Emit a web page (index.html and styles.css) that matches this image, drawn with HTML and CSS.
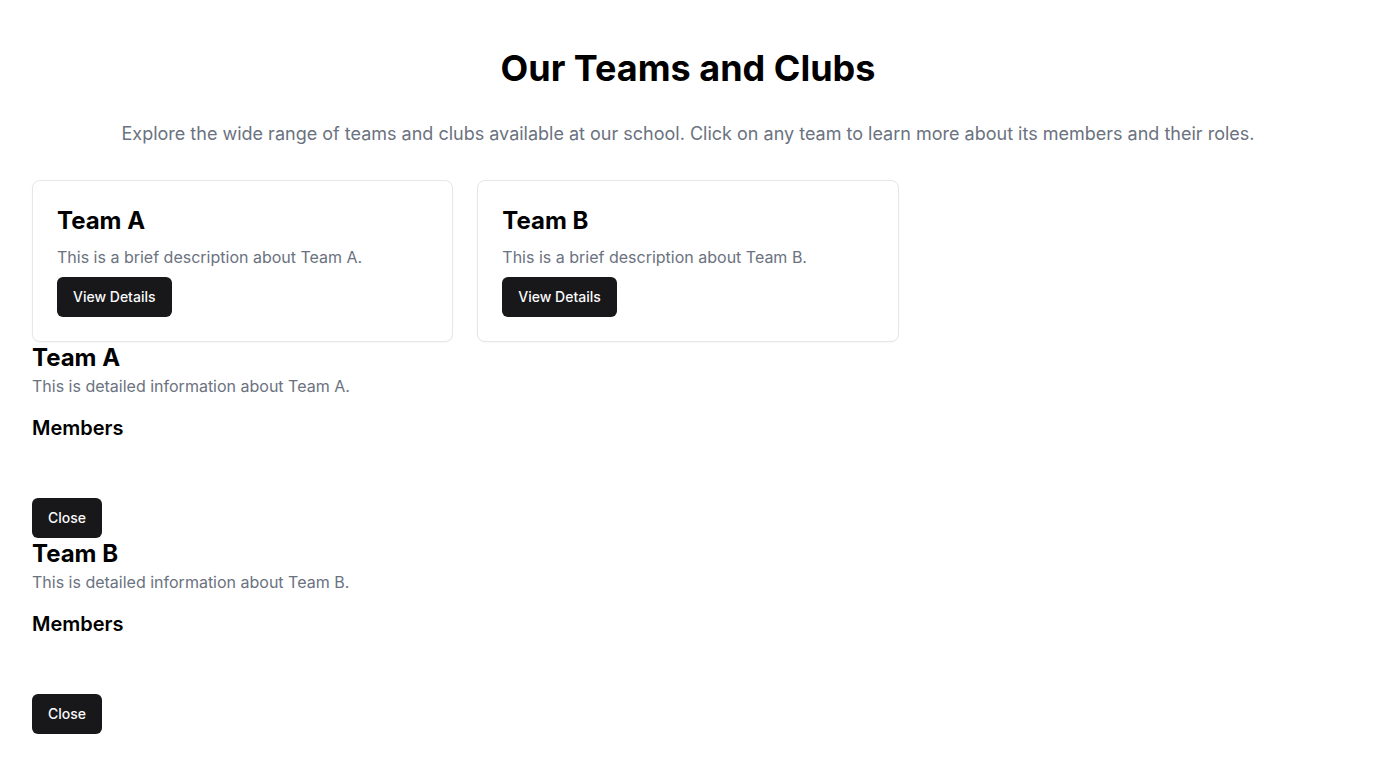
FILE: index.html
```html
<!DOCTYPE html>
<html lang="en">
<head>
<meta charset="utf-8">
<title>Our Teams and Clubs</title>
<link rel="stylesheet" href="styles.css">
</head>
<body>
<main class="page">
  <h1 class="title">Our Teams and Clubs</h1>
  <p class="subtitle">Explore the wide range of teams and clubs available at our school. Click on any team to learn more about its members and their roles.</p>
  <div class="grid">
    <div class="card">
      <h2 class="card-title">Team A</h2>
      <p class="card-desc">This is a brief description about Team A.</p>
      <button class="btn btn-view">View Details</button>
    </div>
    <div class="card">
      <h2 class="card-title">Team B</h2>
      <p class="card-desc">This is a brief description about Team B.</p>
      <button class="btn btn-view">View Details</button>
    </div>
  </div>
  <section class="detail">
    <h2 class="detail-title">Team A</h2>
    <p class="detail-desc">This is detailed information about Team A.</p>
    <h3 class="members">Members</h3>
    <ul class="member-list"></ul>
    <button class="btn btn-close">Close</button>
  </section>
  <section class="detail">
    <h2 class="detail-title">Team B</h2>
    <p class="detail-desc">This is detailed information about Team B.</p>
    <h3 class="members">Members</h3>
    <ul class="member-list"></ul>
    <button class="btn btn-close">Close</button>
  </section>
</main>
</body>
</html>
```
FILE: styles.css
```css
* { box-sizing: border-box; }
html, body { margin: 0; padding: 0; background: #ffffff; }
body {
  font-family: "Inter", "Liberation Sans", sans-serif;
  color: #09090b;
}
.page {
  padding: 48px 32px 32px;
}
.title {
  margin: 0 0 32px;
  font-size: 36px;
  line-height: 40px;
  font-weight: 700;
  text-align: center;
  color: #000;
}
.subtitle {
  margin: 0 0 32px;
  font-size: 18px;
  line-height: 28px;
  color: #6b7280;
  text-align: center;
}
.grid {
  display: grid;
  grid-template-columns: repeat(3, 1fr);
  gap: 24px;
}
.card {
  border: 1px solid #e5e7eb;
  border-radius: 8px;
  padding: 24px;
  box-shadow: 0 1px 2px rgba(0,0,0,0.04);
  background: #fff;
}
.card-title {
  margin: 0 0 8px;
  font-size: 24px;
  line-height: 32px;
  font-weight: 700;
  color: #000;
}
.card-desc {
  margin: 0 0 8px;
  font-size: 16px;
  line-height: 24px;
  color: #6b7280;
}
.btn {
  display: inline-flex;
  align-items: center;
  justify-content: center;
  height: 40px;
  padding: 0 16px 1px;
  border: 0;
  border-radius: 6px;
  background: #18181b;
  color: #fafafa;
  font-family: inherit;
  font-size: 14px;
  font-weight: 500;
}
.detail-title {
  margin: 0;
  font-size: 24px;
  line-height: 32px;
  font-weight: 700;
  color: #000;
}
.detail-desc {
  margin: 0;
  font-size: 16px;
  line-height: 24px;
  color: #6b7280;
}
.members {
  margin: 16px 0 0;
  font-size: 20px;
  line-height: 28px;
  font-weight: 600;
  color: #000;
}
.member-list {
  margin: 0;
  padding: 0;
  list-style: none;
  height: 56px;
}
.detail { display: flex; flex-direction: column; align-items: flex-start; }
```
